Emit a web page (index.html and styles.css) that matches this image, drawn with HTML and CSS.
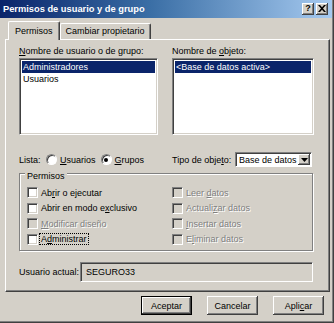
FILE: index.html
```html
<!DOCTYPE html>
<html lang="es">
<head>
<meta charset="utf-8">
<title>Permisos de usuario y de grupo</title>
<link rel="stylesheet" href="styles.css">
</head>
<body>
<div class="window">
  <div class="titlebar">
    <span class="title">Permisos de usuario y de grupo</span>
    <div class="tbtns">
      <span class="tbtn help">?</span>
      <span class="tbtn close"><svg width="8" height="7" viewBox="0 0 8 7"><path d="M0 0h2l2 2.3L6 0h2L5 3.5 8 7H6L4 4.7 2 7H0l3-3.5z" fill="#000"/></svg></span>
    </div>
  </div>
  <div class="client">
    <div class="tabs">
      <div class="tab active">Permisos</div>
      <div class="tab">Cambiar propietario</div>
    </div>
    <div class="panel">
      <div class="cols">
        <div class="lbl"><u>N</u>ombre de usuario o de grupo:</div>
        <div class="lbl">Nombre de <u>o</u>bjeto:</div>
        <div class="list">
          <div class="item sel">Administradores</div>
          <div class="item">Usuarios</div>
        </div>
        <div class="list">
          <div class="item sel">&lt;Base de datos activa&gt;</div>
        </div>
        <div class="ctlrow">
          <span class="lista">Lista:</span>
          <span class="radio"></span><span class="rlbl"><u>U</u>suarios</span>
          <span class="radio on"><span class="dot"></span></span><span class="rlbl"><u>G</u>rupos</span>
        </div>
        <div class="ctlrow">
          <span class="tlbl">Tipo de obje<u>t</u>o:</span>
          <div class="select">
            <span class="sval">Base de datos</span>
            <span class="sbtn"><svg width="7" height="4" viewBox="0 0 7 4"><path d="M0 0h7L3.5 4z" fill="#000"/></svg></span>
          </div>
        </div>
      </div>
      <div class="group">
        <div class="legend">Permisos</div>
        <div class="checks">
          <div class="chk"><span class="box"></span><span>Ab<u>r</u>ir o ejecutar</span></div>
          <div class="chk dis"><span class="box"></span><span>Leer <u>d</u>atos</span></div>
          <div class="chk"><span class="box"></span><span>Abrir en modo e<u>x</u>clusivo</span></div>
          <div class="chk dis"><span class="box"></span><span>Actuali<u>z</u>ar datos</span></div>
          <div class="chk dis"><span class="box"></span><span><u>M</u>odificar diseño</span></div>
          <div class="chk dis"><span class="box"></span><span><u>I</u>nsertar datos</span></div>
          <div class="chk"><span class="box"></span><span class="focus">A<u>d</u>ministrar</span></div>
          <div class="chk dis"><span class="box"></span><span>E<u>l</u>iminar datos</span></div>
        </div>
      </div>
      <div class="userrow">
        <span class="ulbl">Usuario actual:</span>
        <div class="ubox">SEGURO33</div>
      </div>
    </div>
    <div class="buttons">
      <div class="btn default">Aceptar</div>
      <div class="btn">Cancelar</div>
      <div class="btn">Apli<u>c</u>ar</div>
    </div>
  </div>
</div>
</body>
</html>
```

FILE: styles.css
```css
* { box-sizing: border-box; }
html, body { margin: 0; padding: 0; background: #d4d0c8; }
body {
  font-family: "Liberation Sans", Arial, sans-serif;
  font-size: 9px;
  color: #000;
}
u { text-decoration: underline; text-underline-offset: 1px; }

.window {
  width: 334px;
  height: 323px;
  background: #d4d0c8;
  border-right: 1px solid #404040;
  border-bottom: 1px solid #404040;
  box-shadow: inset -1px -1px 0 #808080;
  overflow: hidden;
}

.titlebar {
  height: 18px;
  width: 332px;
  background: linear-gradient(to right, #0a246a 0%, #3a6ea5 45%, #a6caf0 100%);
  display: flex;
  align-items: center;
  justify-content: space-between;
  padding-left: 3px;
  padding-right: 4px;
}
.title {
  color: #fff;
  font-weight: bold;
  font-size: 9.3px;
}
.tbtns { display: flex; gap: 1px; }
.tbtn {
  width: 12px;
  height: 12px;
  background: #d4d0c8;
  box-shadow: inset -1px -1px 0 #404040, inset 1px 1px 0 #fff, inset -2px -2px 0 #808080;
  display: flex;
  align-items: center;
  justify-content: center;
  font-weight: bold;
  font-size: 9px;
  line-height: 1;
  padding-bottom: 1px;
}
.tbtn.close { margin-left: 1px; }

.client { padding: 3px 0 0 5px; }

.tabs {
  display: flex;
  align-items: flex-end;
  height: 18px;
  padding-left: 3px;
  position: relative;
  z-index: 1;
}
.tab {
  height: 16px;
  padding: 0 5px;
  line-height: 15px;
  border-top: 1px solid #fff;
  border-left: 1px solid #fff;
  border-right: 1px solid #404040;
  box-shadow: inset -1px 0 0 #808080;
  border-radius: 2px 2px 0 0;
  background: #d4d0c8;
}
.tab.active {
  height: 19px;
  margin-bottom: -1px;
  padding: 0 6px;
  line-height: 18px;
}

.panel {
  width: 325px;
  height: 253px;
  border-top: 1px solid #fff;
  border-left: 1px solid #fff;
  border-right: 1px solid #404040;
  border-bottom: 1px solid #404040;
  box-shadow: inset -1px -1px 0 #808080;
  padding: 6px 15px 0 13px;
}

.cols {
  display: grid;
  grid-template-columns: 139px 142px;
  column-gap: 14px;
}
.lbl { height: 11px; line-height: 11px; margin-bottom: 1px; }
.list {
  height: 77px;
  background: #fff;
  border-top: 1px solid #808080;
  border-left: 1px solid #808080;
  border-right: 1px solid #fff;
  border-bottom: 1px solid #fff;
  box-shadow: inset 1px 1px 0 #404040, inset -1px -1px 0 #d4d0c8;
  padding: 2px 2px;
}
.item { height: 12px; line-height: 12px; padding-left: 1px; }
.item.sel { background: #0a246a; color: #fff; }

.ctlrow {
  margin-top: 17px;
  height: 15px;
  display: flex;
  align-items: center;
  white-space: nowrap;
}
.lista { width: 27px; flex: none; }
.radio {
  flex: none;
  width: 11px;
  height: 11px;
  border-radius: 50%;
  background: #fff;
  border: 1px solid;
  border-color: #808080 #fff #fff #808080;
  box-shadow: inset 1px 1px 0 #404040;
  display: flex;
  align-items: center;
  justify-content: center;
  margin-right: 3px;
}
.radio .dot { width: 4px; height: 4px; border-radius: 50%; background: #000; }
.rlbl { margin-right: 5px; flex: none; }
.tlbl { width: 63px; flex: none; }
.select {
  flex: none;
  width: 77px;
  height: 15px;
  background: #fff;
  border-top: 1px solid #808080;
  border-left: 1px solid #808080;
  border-right: 1px solid #fff;
  border-bottom: 1px solid #fff;
  box-shadow: inset 1px 1px 0 #404040;
  display: flex;
  align-items: center;
  justify-content: space-between;
  padding: 1px 1px 1px 3px;
}
.sbtn {
  width: 12px;
  height: 11px;
  background: #d4d0c8;
  box-shadow: inset -1px -1px 0 #404040, inset 1px 1px 0 #fff, inset -2px -2px 0 #808080;
  display: flex;
  align-items: center;
  justify-content: center;
}

.group {
  margin-top: 6px;
  width: 294px;
  height: 78px;
  border: 1px solid #808080;
  box-shadow: 1px 1px 0 #fff, inset 1px 1px 0 #fff;
  padding: 0 0 0 7px;
}
.legend {
  margin-top: -3px;
  margin-left: -2px;
  width: fit-content;
  padding: 0 2px;
  height: 11px;
  line-height: 11px;
  background: #d4d0c8;
}
.checks {
  margin-top: 3px;
  display: grid;
  grid-template-columns: 145px 1fr;
  grid-auto-rows: 15.5px;
}
.chk { display: flex; align-items: center; }
.box {
  width: 11px;
  height: 11px;
  background: #fff;
  border-top: 1px solid #808080;
  border-left: 1px solid #808080;
  border-right: 1px solid #fff;
  border-bottom: 1px solid #fff;
  box-shadow: inset 1px 1px 0 #404040, inset -1px -1px 0 #d4d0c8;
  margin-right: 3px;
  flex: none;
}
.chk.dis { color: #808080; text-shadow: 1px 1px 0 #fff; }
.chk.dis .box { background: #d4d0c8; }
.focus { outline: 1px dotted #000; outline-offset: 0; padding: 0 1px; margin-left: -1px; }

.userrow {
  margin-top: 11px;
  display: flex;
  align-items: center;
}
.ulbl { width: 61px; flex: none; }
.ubox {
  width: 233px;
  height: 20px;
  border-top: 1px solid #808080;
  border-left: 1px solid #808080;
  border-right: 1px solid #fff;
  border-bottom: 1px solid #fff;
  box-shadow: inset 1px 1px 0 #404040, inset -1px -1px 0 #d4d0c8;
  line-height: 18px;
  padding-left: 5px;
}

.buttons {
  display: flex;
  justify-content: flex-end;
  gap: 15px;
  margin-top: 4px;
  padding-right: 9px;
}
.btn {
  width: 51px;
  height: 19px;
  background: #d4d0c8;
  box-shadow: inset -1px -1px 0 #404040, inset 1px 1px 0 #fff, inset -2px -2px 0 #808080;
  display: flex;
  align-items: center;
  justify-content: center;
}
.btn.default {
  border: 1px solid #000;
  box-shadow: inset -1px -1px 0 #404040, inset 1px 1px 0 #fff, inset -2px -2px 0 #808080;
}
```
